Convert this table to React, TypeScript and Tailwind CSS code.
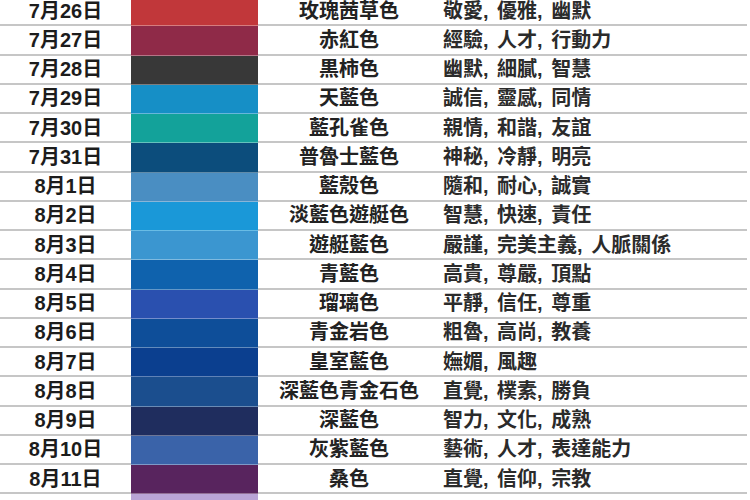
import React from "react";

type Row = { date: string; color: string; name: string; traits: string[] };

const rows: Row[] = [
  { date: "7月26日", color: "#c1373a", name: "玫瑰茜草色", traits: ["敬愛", "優雅", "幽默"] },
  { date: "7月27日", color: "#8f2a48", name: "赤紅色", traits: ["經驗", "人才", "行動力"] },
  { date: "7月28日", color: "#383838", name: "黒柿色", traits: ["幽默", "細膩", "智慧"] },
  { date: "7月29日", color: "#168fc6", name: "天藍色", traits: ["誠信", "靈感", "同情"] },
  { date: "7月30日", color: "#13a29a", name: "藍孔雀色", traits: ["親情", "和諧", "友誼"] },
  { date: "7月31日", color: "#0c4d7c", name: "普魯士藍色", traits: ["神秘", "冷靜", "明亮"] },
  { date: "8月1日", color: "#4a8ec2", name: "藍殼色", traits: ["隨和", "耐心", "誠實"] },
  { date: "8月2日", color: "#1a98d8", name: "淡藍色遊艇色", traits: ["智慧", "快速", "責任"] },
  { date: "8月3日", color: "#3b96d0", name: "遊艇藍色", traits: ["嚴謹", "完美主義", "人脈關係"] },
  { date: "8月4日", color: "#0f62ad", name: "青藍色", traits: ["高貴", "尊嚴", "頂點"] },
  { date: "8月5日", color: "#2a50af", name: "瑠璃色", traits: ["平靜", "信任", "尊重"] },
  { date: "8月6日", color: "#0e4e99", name: "青金岩色", traits: ["粗魯", "高尚", "教養"] },
  { date: "8月7日", color: "#0b3f8f", name: "皇室藍色", traits: ["嫵媚", "風趣"] },
  { date: "8月8日", color: "#1b4e8e", name: "深藍色青金石色", traits: ["直覺", "樸素", "勝負"] },
  { date: "8月9日", color: "#1f2d5e", name: "深藍色", traits: ["智力", "文化", "成熟"] },
  { date: "8月10日", color: "#3a63a9", name: "灰紫藍色", traits: ["藝術", "人才", "表達能力"] },
  { date: "8月11日", color: "#58245e", name: "桑色", traits: ["直覺", "信仰", "宗教"] },
  // next row only peeks in at the bottom edge
  { date: "", color: "#b9a4d6", name: "", traits: [] },
];

export default function App() {
  return (
    <div className="w-[750px] h-[500px] overflow-hidden bg-white font-['Liberation_Sans','Noto_Sans_CJK_TC',sans-serif]">
      <div className="w-[747px] -mt-[3px] flex flex-col">
        {rows.map((r, i) => (
          <div key={i} className="grid grid-cols-[131px_127px_182px_1fr] h-[29.25px]">
            <div className="flex items-center justify-center border-b-2 border-[#c6c6c6] text-[20px] font-bold text-[#1c1c1c] leading-none">
              {r.date}
            </div>
            <div className="border-b border-white/35" style={{ backgroundColor: r.color }} />
            <div className="flex items-center justify-center border-b-2 border-[#c6c6c6] text-[20px] font-bold text-[#222] leading-none">
              {r.name}
            </div>
            <div className="flex items-center pl-[3px] border-b-2 border-[#c6c6c6] text-[20px] font-bold text-[#2b2b2b] leading-none [word-spacing:3px]">
              {r.traits.join(", ")}
            </div>
          </div>
        ))}
      </div>
    </div>
  );
}
